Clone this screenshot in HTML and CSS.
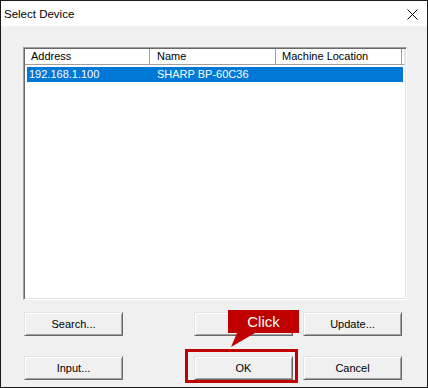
FILE: index.html
```html
<!DOCTYPE html>
<html lang="en">
<head>
  <meta charset="UTF-8">
  <title>Select Device</title>
  <link rel="stylesheet" href="styles.css">
</head>
<body>
  <div class="window">
    <!-- Title bar -->
    <div class="titlebar">
      <span class="title">Select Device</span>
      <svg class="close" width="11" height="11" viewBox="0 0 11 11">
        <path d="M0.5 0.5 L10.5 10.5 M10.5 0.5 L0.5 10.5" stroke="#000" stroke-width="1" fill="none"/>
      </svg>
    </div>

    <!-- Dialog body -->
    <div class="content">
      <div class="listbox">
        <div class="list-header">
          <div class="col c1">Address</div>
          <div class="col c2">Name</div>
          <div class="col c3">Machine Location</div>
          <div class="col filler"></div>
        </div>
        <div class="row selected">
          <div class="cell c1">192.168.1.100</div>
          <div class="cell c2">SHARP BP-60C36</div>
          <div class="cell c3"></div>
        </div>
      </div>

      <div class="btn-row first">
        <button class="btn">Search...</button>
        <button class="btn wide-gap"></button>
        <button class="btn">Update...</button>
      </div>
      <div class="btn-row second">
        <button class="btn">Input...</button>
        <button class="btn wide-gap">OK</button>
        <button class="btn">Cancel</button>
      </div>
    </div>

    <!-- Callout over the OK button -->
    <div class="callout">
      Click
      <svg class="tail" width="26" height="16" viewBox="0 0 26 16">
        <polygon points="9,0 27,0 3,14" fill="#c00000"/>
      </svg>
    </div>
    <div class="highlight"></div>
  </div>
</body>
</html>
```

FILE: styles.css
```css
* {
  margin: 0;
  padding: 0;
  box-sizing: border-box;
}

body {
  font-family: "Liberation Sans", Arial, sans-serif;
  font-size: 11px;
  background: #ffffff;
}

.window {
  position: relative;
  width: 428px;
  height: 388px;
  border: 1px solid #1a1a1a;
  background: #f0f0f0;
}

/* Title bar */
.titlebar {
  height: 25px;
  background: #ffffff;
  display: flex;
  align-items: center;
  justify-content: space-between;
  padding: 0 9px 0 3px;
}

.title {
  font-size: 11.5px;
  color: #000;
}

.close {
  display: block;
  margin-top: 1px;
}

/* Body */
.content {
  padding: 21px 0 0 22px;
}

.listbox {
  width: 384px;
  height: 253px;
  background: #fff;
  border: 1px solid;
  border-color: #a0a0a0 #ffffff #ffffff #a0a0a0;
  box-shadow: inset 1px 1px #696969, inset -1px -1px #e3e3e3;
  padding: 1px 1px 0 1px;
}

.list-header {
  display: flex;
  height: 16px;
}

.col {
  height: 16px;
  line-height: 15px;
  padding-left: 6px;
  border-right: 1px solid #a0a0a0;
  border-bottom: 1px solid #a0a0a0;
  color: #000;
  white-space: nowrap;
}

.col.c1 { width: 125px; }
.col.c2 { width: 126px; padding-left: 7px; }
.col.c3 { width: 126px; }
.col.filler { width: 3px; padding: 0; border-right: 1px solid #e3e3e3; }

.row {
  display: flex;
  height: 15px;
  line-height: 15px;
  margin: 2px 0 0 2px;
  width: 376px;
}

.row.selected {
  background: #0078d7;
  color: #fff;
}

.cell {
  padding-left: 7px;
  white-space: nowrap;
}

.cell.c1 { width: 123px; padding-left: 2px; }
.cell.c2 { width: 126px; }
.cell.c3 { flex: 1; }

/* Buttons */
.btn-row {
  display: flex;
  padding-left: 1px;
}

.btn-row.first { margin-top: 12px; }
.btn-row.second { margin-top: 20px; }

.btn {
  width: 99px;
  height: 24px;
  margin-right: 10px;
  font-family: "Liberation Sans", Arial, sans-serif;
  font-size: 11px;
  color: #000;
  background: #f0f0f0;
  border: 1px solid;
  border-color: #e3e3e3 #696969 #696969 #e3e3e3;
  box-shadow: inset 1px 1px #ffffff, inset -1px -1px #a0a0a0;
}

.btn.wide-gap {
  margin-left: 61px;
}

/* Annotation overlay */
.callout {
  position: absolute;
  left: 227px;
  top: 309px;
  width: 71px;
  height: 23px;
  background: #c00000;
  color: #fff;
  font-size: 15px;
  line-height: 23px;
  text-align: center;
}

.tail {
  position: absolute;
  left: 0;
  top: 23px;
  overflow: visible;
}

.highlight {
  position: absolute;
  left: 184px;
  top: 348px;
  width: 113px;
  height: 34px;
  border: 3px solid #c00000;
}
```
